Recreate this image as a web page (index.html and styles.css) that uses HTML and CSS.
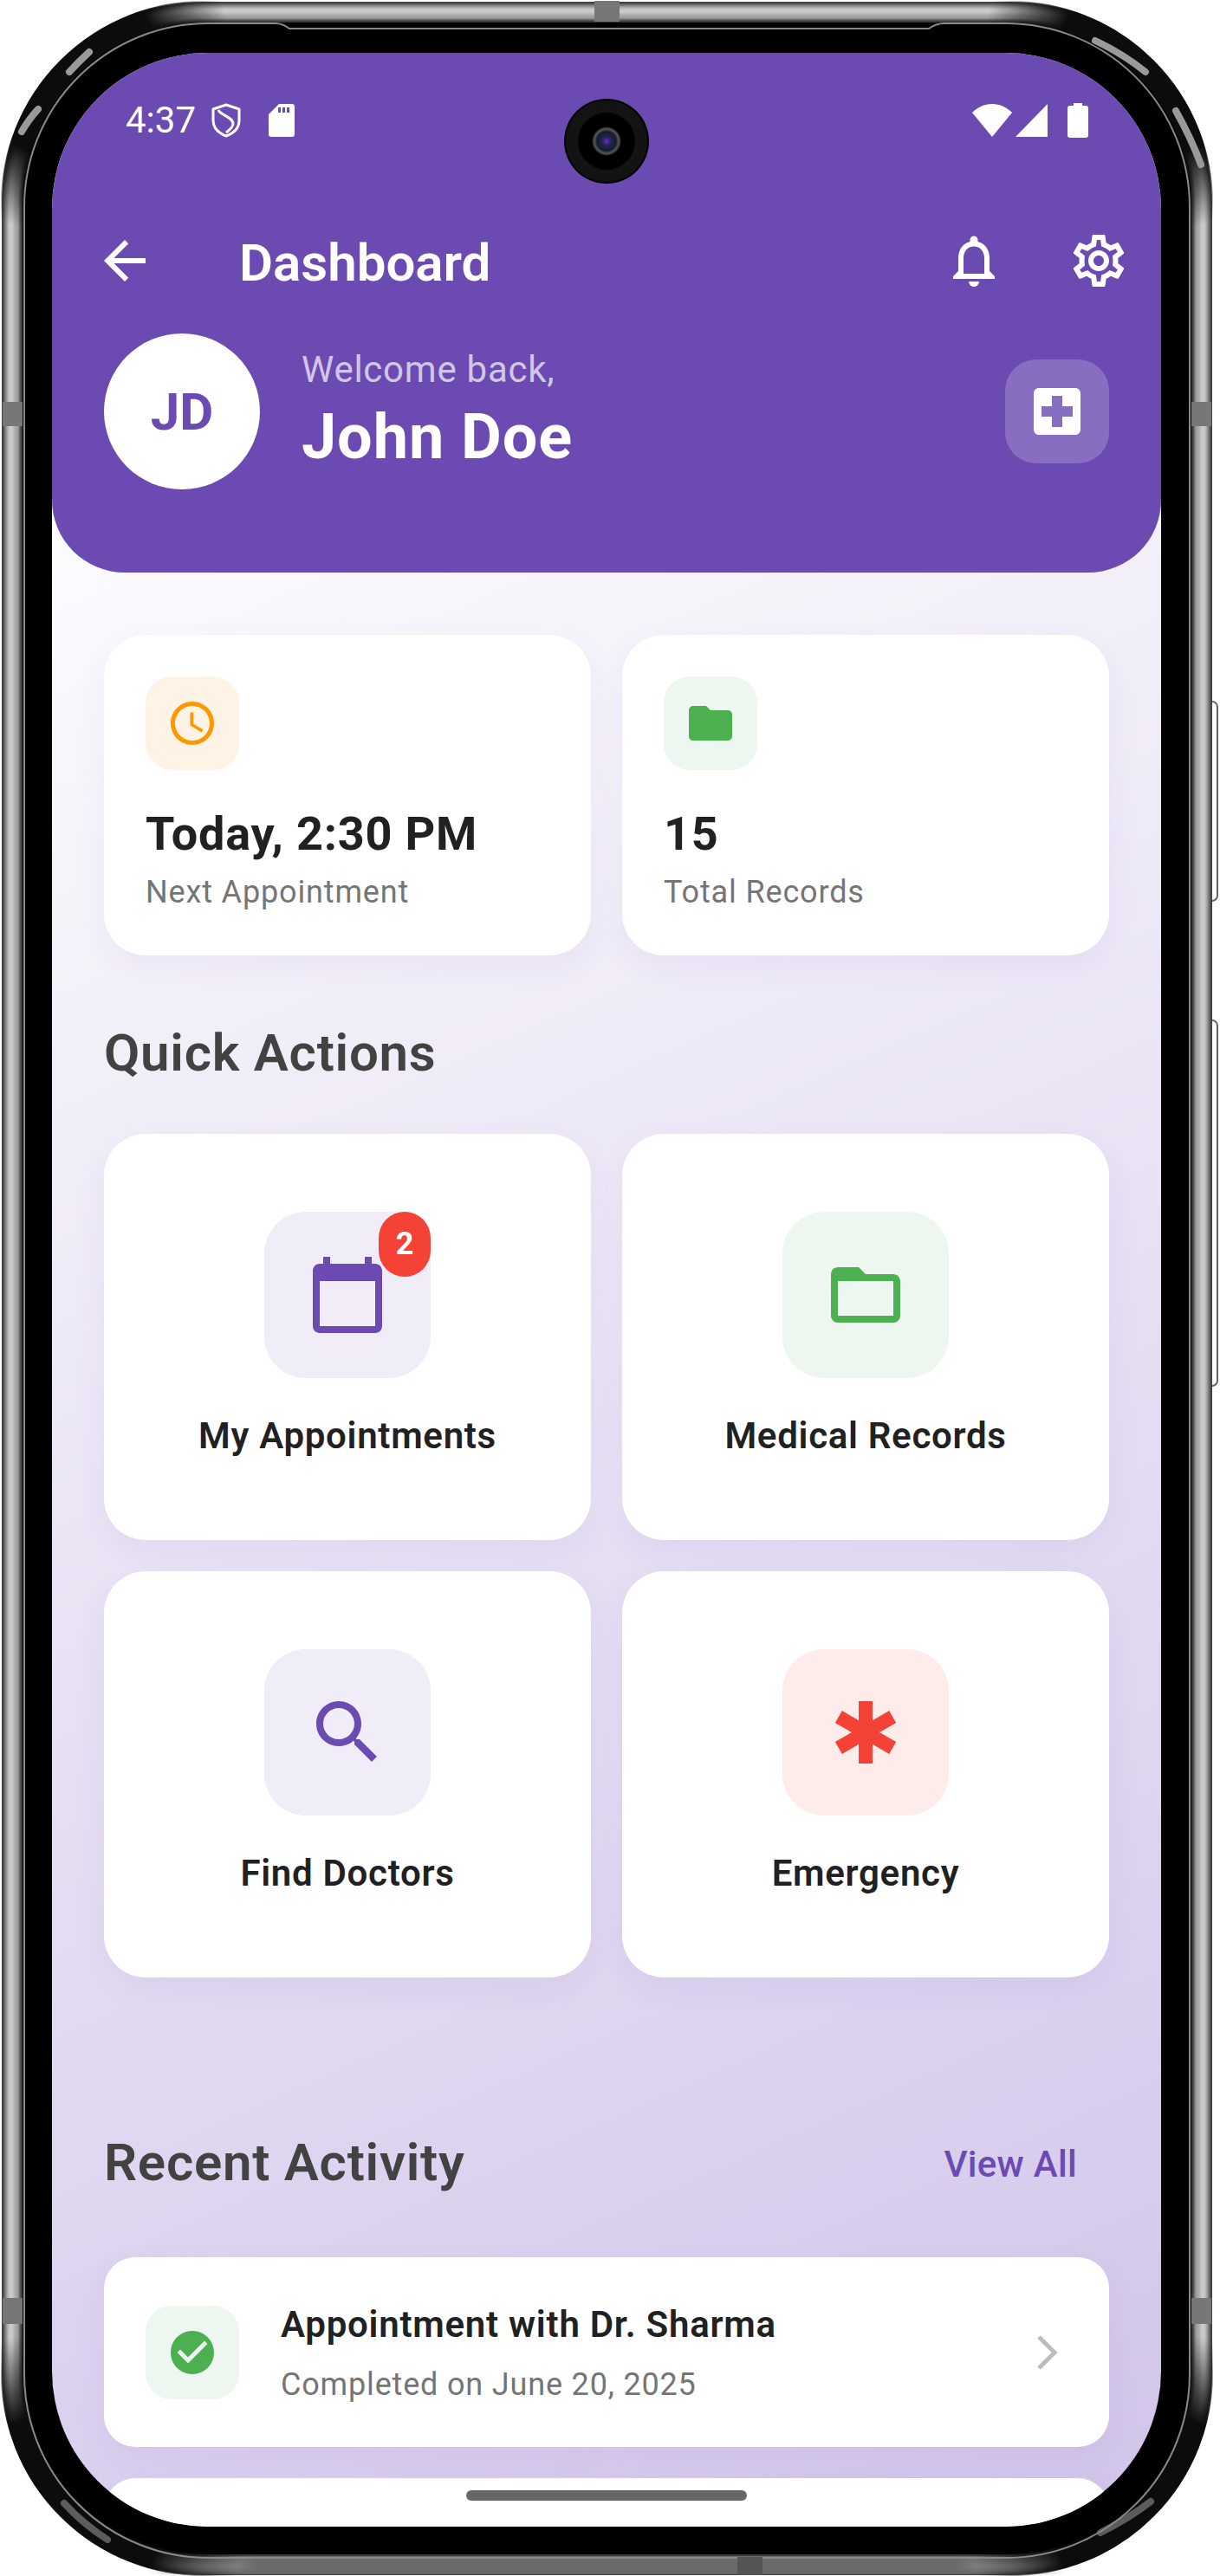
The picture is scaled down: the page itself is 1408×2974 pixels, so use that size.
FILE: index.html
```html
<!DOCTYPE html>
<html>
<head>
    <title>Dashboard</title>
    <meta name="viewport" content="width=device-width, initial-scale=1.0">
    <link rel="stylesheet" href="styles.css">
</head>
<body>
<div class="phone">
    <!-- device frame, sits behind the screen -->
    <svg class="frame" width="1408" height="2974" viewBox="0 0 1408 2974">
        <defs>
            <filter id="soft" x="-2%" y="-2%" width="104%" height="104%">
                <feGaussianBlur stdDeviation="1.4"/>
            </filter>
            <linearGradient id="bottomRun" x1="0" x2="1" y1="0" y2="0">
                <stop offset="0" stop-color="#6a6a6a" stop-opacity="0"/>
                <stop offset=".12" stop-color="#6a6a6a"/>
                <stop offset=".88" stop-color="#6a6a6a"/>
                <stop offset="1" stop-color="#6a6a6a" stop-opacity="0"/>
            </linearGradient>
            <radialGradient id="cornerTL" gradientUnits="userSpaceOnUse" cx="75" cy="75" r="195">
                <stop offset=".55" stop-color="#0c0c0c"/>
                <stop offset="1" stop-color="#0c0c0c" stop-opacity="0"/>
            </radialGradient>
            <radialGradient id="cornerTR" gradientUnits="userSpaceOnUse" cx="1326" cy="75" r="195">
                <stop offset=".55" stop-color="#0c0c0c"/>
                <stop offset="1" stop-color="#0c0c0c" stop-opacity="0"/>
            </radialGradient>
            <radialGradient id="cornerBL" gradientUnits="userSpaceOnUse" cx="75" cy="2899" r="210">
                <stop offset=".55" stop-color="#0c0c0c"/>
                <stop offset="1" stop-color="#0c0c0c" stop-opacity="0"/>
            </radialGradient>
            <radialGradient id="cornerBR" gradientUnits="userSpaceOnUse" cx="1326" cy="2899" r="210">
                <stop offset=".55" stop-color="#0c0c0c"/>
                <stop offset="1" stop-color="#0c0c0c" stop-opacity="0"/>
            </radialGradient>
        </defs>

        <!-- side buttons -->
        <rect class="side-btn" x="1392" y="810" width="13" height="230" rx="6"/>
        <rect class="side-btn" x="1392" y="1178" width="13" height="422" rx="6"/>

        <!-- metal band, outside in -->
        <rect x="2" y="2" width="1397" height="2971" rx="233" fill="#3c3c3c"/>
        <g filter="url(#soft)">
            <rect x="5" y="5" width="1391" height="2965" rx="230" fill="#8e8e8e"/>
            <rect x="9" y="9" width="1383" height="2957" rx="226" fill="#cbcbcb"/>
            <rect x="16" y="16" width="1369" height="2943" rx="219" fill="#a6a6a6"/>
            <rect x="22" y="22" width="1357" height="2931" rx="213" fill="#383838"/>
        </g>
        <rect x="26" y="26" width="1349" height="2923" rx="209" fill="#000"/>

        <rect x="170" y="2951" width="1060" height="21" fill="url(#bottomRun)"/>

        <!-- darker corners -->
        <g fill="none" stroke-width="26">
            <rect x="14" y="14" width="1373" height="2947" rx="221" stroke="url(#cornerTL)"/>
            <rect x="14" y="14" width="1373" height="2947" rx="221" stroke="url(#cornerTR)"/>
            <rect x="14" y="14" width="1373" height="2947" rx="221" stroke="url(#cornerBL)"/>
            <rect x="14" y="14" width="1373" height="2947" rx="221" stroke="url(#cornerBR)"/>
        </g>

        <!-- corner glints -->
        <g class="glint">
            <path d="M80 83 Q90 72 103 60"/>
            <path d="M25 152 Q33 138 44 126"/>
            <path d="M1264 47 Q1296 62 1322 83"/>
            <path d="M1357 128 Q1374 158 1386 190"/>
        </g>
        <g class="glint glint-low">
            <path d="M74 2890 Q96 2914 124 2932"/>
            <path d="M1270 2924 Q1302 2908 1328 2888"/>
        </g>

        <!-- inner hairline -->
        <path class="hairline" d="M28 240 A212 212 0 0 1 240 27 H318 Q326 27 334 33 H1072 Q1080 27 1090 27 H1160 A212 212 0 0 1 1373 240 V2740 A212 212 0 0 1 1160 2953 H240 A212 212 0 0 1 28 2740 Z"/>

        <!-- antenna bands -->
        <g fill="#757875">
            <rect x="3" y="464" width="23" height="28"/>
            <rect x="1375" y="464" width="23" height="28"/>
            <rect x="3" y="2653" width="23" height="30"/>
            <rect x="1375" y="2653" width="23" height="30"/>
            <rect x="686" y="1" width="29" height="24"/>
            <rect x="851" y="2952" width="29" height="21" fill="#555"/>
        </g>
    </svg>

    <div class="screen">
        <header class="header">
            <div class="status-bar">
                <div class="status-left">
                    <span class="status-time">4:37</span>
                    <svg class="icon-shield" width="36" height="40" viewBox="0 0 36 40">
                        <path d="M18 2 L33 7 V20 C33 29 26 35 18 38 C10 35 3 29 3 20 V7 Z" fill="none" stroke="#fff" stroke-width="3" stroke-linejoin="round"/>
                        <path d="M9 8 C11 14 26 16 26 24 C26 28 22 31 18 34" fill="none" stroke="#fff" stroke-width="3"/>
                    </svg>
                    <svg class="icon-sd" width="30" height="38" viewBox="0 0 30 38">
                        <path fill="#fff" fill-rule="evenodd" d="M12 0 H27 C29 0 30 1 30 3 V35 C30 37 29 38 27 38 H3 C1 38 0 37 0 35 V12 Z M11 4 V10 H14 V4 Z M16 4 V10 H19 V4 Z M21 4 V10 H24 V4 Z"/>
                    </svg>
                </div>
                <div class="status-right">
                    <svg width="46" height="38" viewBox="0 0 46 38"><path fill="#fff" d="M23 38 L0 10 C6 4 14 0 23 0 C32 0 40 4 46 10 Z"/></svg>
                    <svg width="38" height="38" viewBox="0 0 38 38"><path fill="#fff" d="M0 38 L37 0 V38 Z"/></svg>
                    <svg class="icon-battery" width="24" height="40" viewBox="0 0 24 40"><path fill="#fff" d="M7 0 H17 V3 H21 C23 3 24 4 24 6 V37 C24 39 23 40 21 40 H3 C1 40 0 39 0 37 V6 C0 4 1 3 3 3 H7 Z"/></svg>
                </div>
            </div>

            <div class="app-bar">
                <button type="button" class="icon-btn">
                    <svg width="72" height="72" viewBox="0 0 24 24"><path d="M20 11H7.83l5.59-5.59L12 4l-8 8 8 8 1.41-1.41L7.83 13H20v-2z"/></svg>
                </button>
                <h1 class="app-title">Dashboard</h1>
                <button type="button" class="icon-btn icon-btn-bell">
                    <svg width="72" height="72" viewBox="0 0 24 24"><path d="M12 22c1.1 0 2-.9 2-2h-4c0 1.1.9 2 2 2zm6-6v-5c0-3.07-1.63-5.64-4.5-6.32V4c0-.83-.67-1.5-1.5-1.5s-1.5.67-1.5 1.5v.68C7.64 5.36 6 7.92 6 11v5l-2 2v1h16v-1l-2-2zm-2 1H8v-6c0-2.48 1.51-4.5 4-4.5s4 2.02 4 4.5v6z"/></svg>
                </button>
                <button type="button" class="icon-btn">
                    <svg width="72" height="72" viewBox="0 0 24 24"><path d="M19.43 12.98c.04-.32.07-.64.07-.98 0-.34-.03-.66-.07-.98l2.11-1.65c.19-.15.24-.42.12-.64l-2-3.46c-.09-.16-.26-.25-.44-.25-.06 0-.12.01-.17.03l-2.49 1c-.52-.4-1.08-.73-1.69-.98l-.38-2.65C14.46 2.18 14.25 2 14 2h-4c-.25 0-.46.18-.49.42l-.38 2.65c-.61.25-1.17.59-1.69.98l-2.49-1c-.06-.02-.12-.03-.18-.03-.17 0-.34.09-.43.25l-2 3.46c-.13.22-.07.49.12.64l2.11 1.65c-.04.32-.07.65-.07.98 0 .33.03.66.07.98l-2.11 1.65c-.19.15-.24.42-.12.64l2 3.46c.09.16.26.25.44.25.06 0 .12-.01.17-.03l2.49-1c.52.4 1.08.73 1.69.98l.38 2.65c.03.24.24.42.49.42h4c.25 0 .46-.18.49-.42l.38-2.65c.61-.25 1.17-.59 1.69-.98l2.49 1c.06.02.12.03.18.03.17 0 .34-.09.43-.25l2-3.46c.12-.22.07-.49-.12-.64l-2.11-1.65zm-1.98-1.71c.04.31.05.52.05.73 0 .21-.02.43-.05.73l-.14 1.13.89.7 1.08.84-.7 1.21-1.27-.51-1.04-.42-.9.68c-.43.32-.84.56-1.25.73l-1.06.43-.16 1.13-.2 1.35h-1.4l-.19-1.35-.16-1.13-1.06-.43c-.43-.18-.83-.41-1.23-.71l-.91-.7-1.06.43-1.27.51-.7-1.21 1.08-.84.89-.7-.14-1.13c-.03-.31-.05-.54-.05-.74s.02-.43.05-.73l.14-1.13-.89-.7-1.08-.84.7-1.21 1.27.51 1.04.42.9-.68c.43-.32.84-.56 1.25-.73l1.06-.43.16-1.13.2-1.35h1.39l.19 1.35.16 1.13 1.06.43c.43.18.83.41 1.23.71l.91.7 1.06-.43 1.27-.51.7 1.21-1.07.85-.89.7.14 1.13zM12 8c-2.21 0-4 1.79-4 4s1.79 4 4 4 4-1.79 4-4-1.79-4-4-4zm0 6c-1.1 0-2-.9-2-2s.9-2 2-2 2 .9 2 2-.9 2-2 2z"/></svg>
                </button>
            </div>

            <div class="profile">
                <div class="avatar">JD</div>
                <div class="profile-text">
                    <div class="welcome">Welcome back,</div>
                    <div class="user-name">John Doe</div>
                </div>
                <div class="hospital-box">
                    <svg width="72" height="72" viewBox="0 0 24 24"><path d="M19 3H5c-1.1 0-1.99.9-1.99 2L3 19c0 1.1.9 2 2 2h14c1.1 0 2-.9 2-2V5c0-1.1-.9-2-2-2zm-1 11h-4v4h-4v-4H6v-4h4V6h4v4h4v4z"/></svg>
                </div>
            </div>
        </header>

        <main class="content">
            <section class="stats">
                <div class="card stat-card">
                    <div class="stat-icon tint-orange">
                        <svg width="60" height="60" viewBox="0 0 24 24"><path fill="#ff9800" d="M11.99 2C6.47 2 2 6.48 2 12s4.47 10 9.99 10C17.52 22 22 17.52 22 12S17.52 2 11.99 2zM12 20c-4.42 0-8-3.58-8-8s3.58-8 8-8 8 3.58 8 8-3.58 8-8 8zm.5-13H11v6l5.25 3.15.75-1.23-4.5-2.67z"/></svg>
                    </div>
                    <div class="stat-value">Today, 2:30 PM</div>
                    <div class="stat-label">Next Appointment</div>
                </div>
                <div class="card stat-card">
                    <div class="stat-icon tint-green">
                        <svg width="60" height="60" viewBox="0 0 24 24"><path fill="#4caf50" d="M10 4H4c-1.1 0-1.99.9-1.99 2L2 18c0 1.1.9 2 2 2h16c1.1 0 2-.9 2-2V8c0-1.1-.9-2-2-2h-8l-2-2z"/></svg>
                    </div>
                    <div class="stat-value">15</div>
                    <div class="stat-label">Total Records</div>
                </div>
            </section>

            <h2 class="section-title quick-title">Quick Actions</h2>

            <section class="actions">
                <div class="card action-card">
                    <div class="action-icon tint-purple">
                        <svg width="96" height="96" viewBox="0 0 24 24"><path fill="#6b4ab1" d="M20 3h-1V1h-2v2H7V1H5v2H4c-1.1 0-2 .9-2 2v16c0 1.1.9 2 2 2h16c1.1 0 2-.9 2-2V5c0-1.1-.9-2-2-2zm0 18H4V8h16v13z"/></svg>
                        <span class="badge">2</span>
                    </div>
                    <div class="action-label">My Appointments</div>
                </div>
                <div class="card action-card">
                    <div class="action-icon tint-green">
                        <svg width="96" height="96" viewBox="0 0 24 24"><path fill="#4caf50" d="M20 6h-8l-2-2H4c-1.1 0-1.99.9-1.99 2L2 18c0 1.1.9 2 2 2h16c1.1 0 2-.9 2-2V8c0-1.1-.9-2-2-2zm0 12H4V8h16v10z"/></svg>
                    </div>
                    <div class="action-label">Medical Records</div>
                </div>
                <div class="card action-card">
                    <div class="action-icon tint-purple">
                        <svg width="96" height="96" viewBox="0 0 24 24"><path fill="#6b4ab1" d="M15.5 14h-.79l-.28-.27C15.41 12.59 16 11.11 16 9.5 16 5.91 13.09 3 9.5 3S3 5.91 3 9.5 5.91 16 9.5 16c1.61 0 3.09-.59 4.23-1.57l.27.28v.79l5 4.99L20.49 19l-4.99-5zm-6 0C7.01 14 5 11.99 5 9.5S7.01 5 9.5 5 14 7.01 14 9.5 11.99 14 9.5 14z"/></svg>
                    </div>
                    <div class="action-label">Find Doctors</div>
                </div>
                <div class="card action-card">
                    <div class="action-icon tint-red">
                        <svg width="96" height="96" viewBox="0 0 24 24"><path fill="#f44336" d="M20.79 9.23l-2-3.46L14 8.54V3h-4v5.54L5.21 5.77l-2 3.46L8 12l-4.79 2.77 2 3.46L10 15.46V21h4v-5.54l4.79 2.77 2-3.46L16 12l4.79-2.77z"/></svg>
                    </div>
                    <div class="action-label">Emergency</div>
                </div>
            </section>

            <div class="recent-head">
                <h2 class="section-title">Recent Activity</h2>
                <span class="view-all">View All</span>
            </div>

            <div class="card activity-card">
                <div class="stat-icon tint-green">
                    <svg width="60" height="60" viewBox="0 0 24 24"><path fill="#4caf50" d="M12 2C6.48 2 2 6.48 2 12s4.48 10 10 10 10-4.48 10-10S17.52 2 12 2zm-2 15l-5-5 1.41-1.41L10 14.17l7.59-7.59L19 8l-9 9z"/></svg>
                </div>
                <div class="activity-text">
                    <div class="activity-title">Appointment with Dr. Sharma</div>
                    <div class="activity-sub">Completed on June 20, 2025</div>
                </div>
                <svg class="chevron" width="26" height="40" viewBox="0 0 26 40"><path d="M3 2 L21 20 L3 38" fill="none" stroke="#bdbdbd" stroke-width="5"/></svg>
            </div>
            <div class="card activity-card activity-next"></div>
        </main>

        <div class="camera"></div>
        <div class="home-bar"></div>
    </div>
</div>
</body>
</html>
```

FILE: styles.css
```css
body {
    margin: 0;
    background: #fff;
    font-family: Roboto, "Liberation Sans", sans-serif;
}

.phone {
    position: relative;
    box-sizing: border-box;
    width: 1408px;
    height: 2974px;
    padding: 61px 68px 57px 60px;
}

.frame {
    position: absolute;
    left: 0;
    top: 0;
}

.side-btn {
    fill: #fff;
    stroke: #666;
    stroke-width: 2;
}

.glint path {
    fill: none;
    stroke: #9a9a9a;
    stroke-width: 8;
    stroke-linecap: round;
}

.glint-low path {
    stroke: #5c5c5c;
}

.hairline {
    fill: none;
    stroke: #8a8a8a;
    stroke-width: 2;
}

.screen {
    position: relative;
    width: 1280px;
    height: 2856px;
    border-radius: 180px;
    overflow: hidden;
    background: linear-gradient(155.9deg, #fff 10%, #d1c4e9 100%);
}

/* header */

.header {
    height: 600px;
    background: #6b4ab1;
    border-radius: 0 0 84px 84px;
    color: #fff;
}

.status-bar {
    display: flex;
    align-items: center;
    justify-content: space-between;
    height: 156px;
    padding: 0 84px 0 85px;
}

.status-left,
.status-right {
    display: flex;
    align-items: center;
}

.status-time {
    font-size: 42px;
    line-height: 48px;
}

.icon-shield {
    margin-left: 17px;
}

.icon-sd {
    margin-left: 31px;
}

.status-right svg {
    margin-left: 4px;
}

.status-right .icon-battery {
    margin-left: 22px;
}

.app-bar {
    display: flex;
    align-items: center;
    height: 168px;
    padding-left: 12px;
}

.icon-btn {
    display: flex;
    align-items: center;
    justify-content: center;
    width: 144px;
    height: 144px;
    padding: 0;
    border: none;
    background: none;
}

.icon-btn svg {
    fill: #fff;
}

.app-title {
    margin: 6px auto 0 60px;
    font-size: 60px;
    font-weight: 600;
    line-height: 72px;
}

.profile {
    display: flex;
    align-items: center;
    padding: 0 60px;
}

.avatar {
    display: flex;
    align-items: center;
    justify-content: center;
    width: 180px;
    height: 180px;
    border-radius: 50%;
    background: #fff;
    color: #6b4ab1;
    font-size: 60px;
    font-weight: 700;
}

.profile-text {
    margin-left: 48px;
    padding-bottom: 2px;
}

.welcome {
    font-size: 42px;
    line-height: 50px;
    letter-spacing: .75px;
    color: rgba(255, 255, 255, .7);
}

.user-name {
    margin-top: 11px;
    font-size: 72px;
    font-weight: 700;
    line-height: 84px;
    letter-spacing: .9px;
}

.hospital-box {
    display: flex;
    align-items: center;
    justify-content: center;
    width: 120px;
    height: 120px;
    margin-left: auto;
    border-radius: 36px;
    background: rgba(255, 255, 255, .2);
}

.hospital-box svg {
    fill: #fff;
}

/* content */

.content {
    padding: 72px 60px 0;
}

.card {
    background: #fff;
    border-radius: 48px;
    box-shadow: 0 12px 36px rgba(103, 58, 183, .06);
}

.stats,
.actions {
    display: grid;
    grid-template-columns: 1fr 1fr;
    gap: 36px;
}

.stat-card {
    box-sizing: border-box;
    height: 370px;
    padding: 48px 48px 0;
}

.stat-icon {
    display: flex;
    align-items: center;
    justify-content: center;
    flex: none;
    width: 108px;
    height: 108px;
    border-radius: 30px;
}

.tint-orange { background: #fff3e6; }
.tint-green { background: #edf7ef; }
.tint-purple { background: #f0ecf8; }
.tint-red { background: #feecea; }

.stat-value {
    margin-top: 38px;
    font-size: 54px;
    font-weight: 700;
    line-height: 72px;
    letter-spacing: .8px;
    color: #212121;
}

.stat-label {
    margin-top: 7px;
    font-size: 36px;
    line-height: 48px;
    letter-spacing: .85px;
    color: #757575;
}

.section-title {
    margin: 0;
    font-size: 60px;
    font-weight: 600;
    line-height: 64px;
    letter-spacing: .75px;
    color: #424242;
}

.quick-title {
    margin: 81px 0 61px;
}

.action-card {
    box-sizing: border-box;
    display: flex;
    flex-direction: column;
    align-items: center;
    height: 469px;
    padding-top: 90px;
}

.action-icon {
    position: relative;
    display: flex;
    align-items: center;
    justify-content: center;
    width: 192px;
    height: 192px;
    border-radius: 48px;
}

.badge {
    position: absolute;
    top: 0;
    right: 0;
    width: 60px;
    height: 75px;
    border-radius: 30px;
    background: #f44336;
    color: #fff;
    font-size: 36px;
    font-weight: 700;
    line-height: 75px;
    text-align: center;
}

.action-label {
    margin-top: 42px;
    font-size: 42px;
    font-weight: 560;
    line-height: 50px;
    letter-spacing: .7px;
    color: #212121;
}

.recent-head {
    display: flex;
    align-items: center;
    justify-content: space-between;
    margin: 182px 0 77px;
    padding-right: 37px;
}

.view-all {
    margin-top: 4px;
    font-size: 42px;
    font-weight: 500;
    line-height: 60px;
    letter-spacing: .3px;
    color: #6b4ab1;
}

.activity-card {
    display: flex;
    align-items: center;
    box-sizing: border-box;
    height: 219px;
    padding: 0 58px 0 48px;
    border-radius: 36px;
}

.activity-next {
    margin-top: 36px;
}

.activity-text {
    margin-left: 48px;
    padding-top: 3px;
}

.activity-title {
    font-size: 42px;
    font-weight: 560;
    line-height: 50px;
    letter-spacing: .75px;
    color: #212121;
}

.activity-sub {
    margin-top: 22px;
    font-size: 36px;
    line-height: 44px;
    letter-spacing: .83px;
    color: #757575;
}

.chevron {
    margin-left: auto;
}

/* overlays */

.camera {
    position: absolute;
    left: 591px;
    top: 53px;
    width: 98px;
    height: 98px;
    border-radius: 50%;
    background: radial-gradient(circle at 50% 50%,
        #5a35c8 0, #2a2350 5px, #131c2e 11px, #555 14px, #444 15px, #000 17px,
        #000 32px, #141414 34px, #131313 46px, #000 48px);
}

.home-bar {
    position: absolute;
    left: 478px;
    top: 2814px;
    width: 324px;
    height: 12px;
    border-radius: 6px;
    background: #666;
}
```
